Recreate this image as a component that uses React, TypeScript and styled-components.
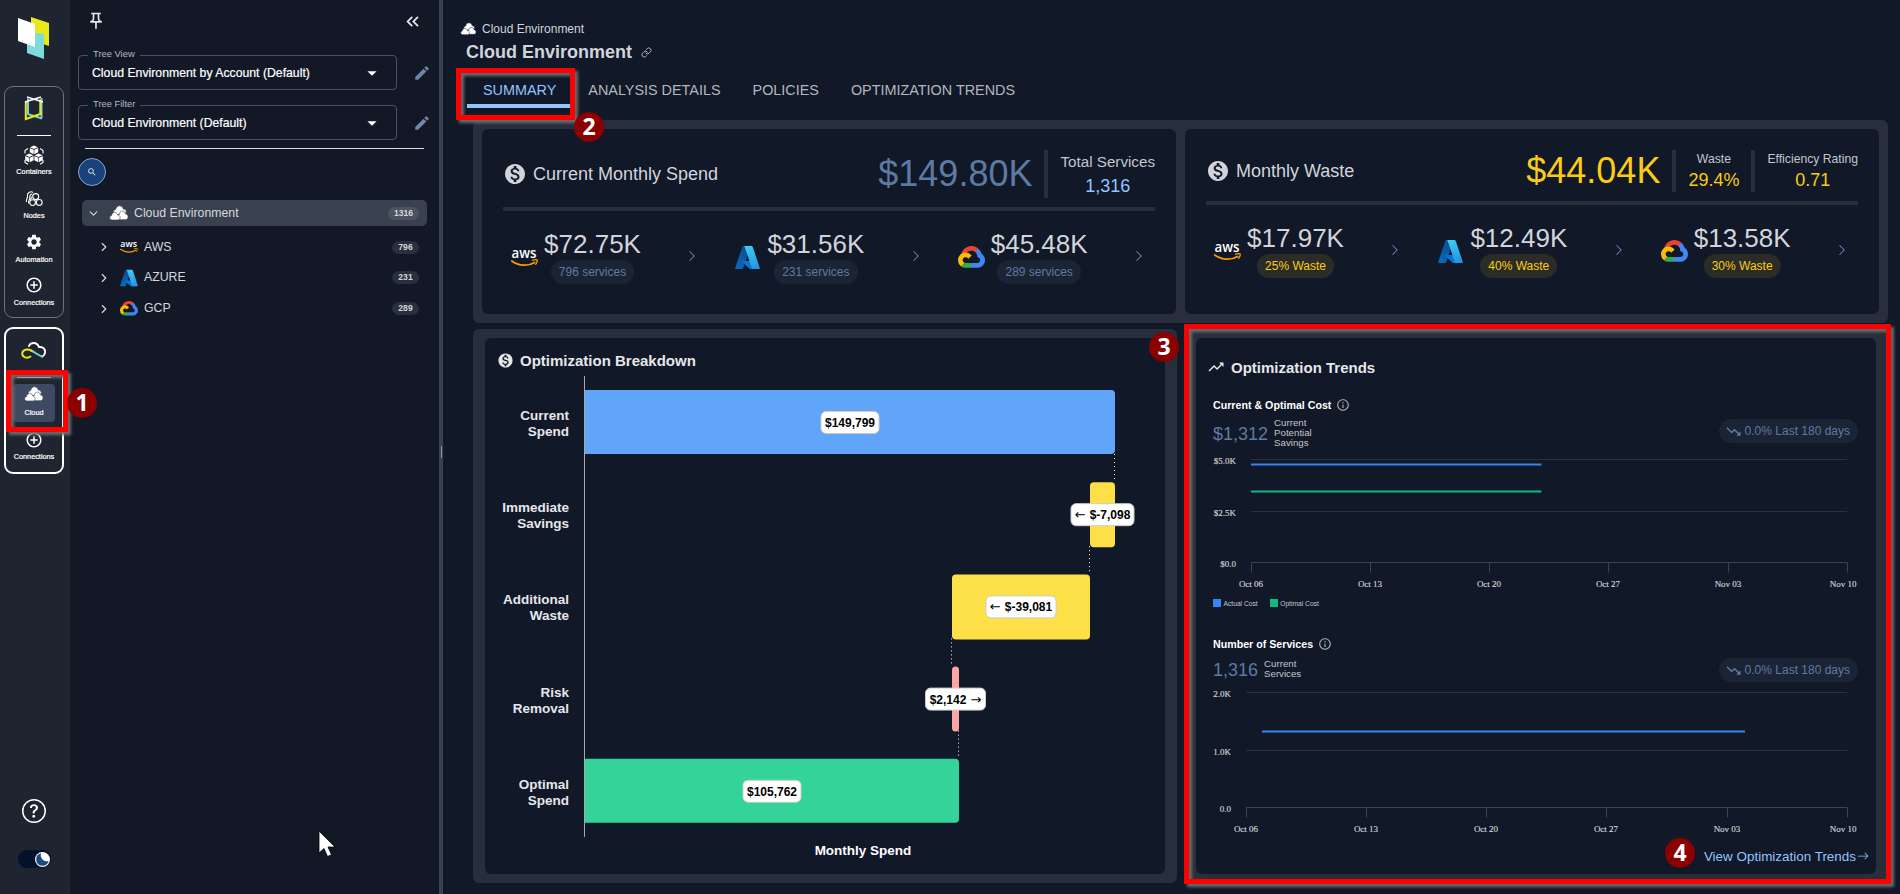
import React from "react";
import styled, { createGlobalStyle, css } from "styled-components";
import {
  MdAddCircleOutline,
  MdArrowDropDown,
  MdEdit,
  MdInfoOutline,
  MdKeyboardDoubleArrowLeft,
  MdMonetizationOn,
  MdOutlinePushPin,
  MdSearch,
  MdSettings,
  MdTrendingDown,
  MdTrendingUp,
} from "react-icons/md";
import { BsArrowRight, BsChevronRight, BsQuestionCircle } from "react-icons/bs";
import { FiChevronDown, FiChevronRight, FiLink } from "react-icons/fi";

const GlobalStyle = createGlobalStyle`
  * { box-sizing: border-box; }
  body {
    margin: 0;
    background: #111827;
    color: #d1d5db;
    font-family: "Liberation Sans", Arial, sans-serif;
    overflow: hidden;
  }
  svg { display: block; flex: none; overflow: visible; }
`;

/* ---------- shell ---------- */

const Shell = styled.div`
  position: relative;
  display: flex;
  width: 1900px;
  height: 894px;
  overflow: hidden;
  white-space: nowrap;
`;

const Rail = styled.nav`
  width: 70px;
  padding: 17px 4px 26px;
  background: #1e2430;
  display: flex;
  flex-direction: column;
  align-items: center;
`;

const RailGroup = styled.div<{ $active?: boolean }>`
  width: 60px;
  margin-left: -2px;
  border-radius: 9px;
  border: ${(p) => (p.$active ? "2px solid #fff" : "1px solid #6b7280")};
  display: flex;
  flex-direction: column;
  align-items: center;
  height: ${(p) => (p.$active ? 147 : 232)}px;
  margin-top: ${(p) => (p.$active ? 9 : 26)}px;
  padding-top: ${(p) => (p.$active ? 13 : 9)}px;
`;

const RailRule = styled.hr<{ $top: number }>`
  width: 34px;
  height: 1px;
  border: 0;
  margin: ${(p) => p.$top}px 0 0;
  background: #fff;
`;

const RailItem = styled.a<{ $height: number; $top?: number; $selected?: boolean }>`
  width: 56px;
  height: ${(p) => p.$height}px;
  margin-top: ${(p) => p.$top ?? 0}px;
  display: flex;
  flex-direction: column;
  align-items: center;
  justify-content: space-between;
  font-size: 7.3px;
  line-height: 9px;
  color: #fff;
  -webkit-text-stroke: 0.2px #fff;
  ${(p) =>
    p.$selected &&
    css`
      width: 42px;
      background: #3d4a61;
      border-radius: 4px;
      padding: 3px 0 5px;
    `}
`;

const RailFooter = styled.div`
  margin-top: auto;
  margin-left: -2px;
  display: flex;
  flex-direction: column;
  align-items: center;
  gap: 27px;
  color: #fff;
`;

const ThemeSwitch = styled.div`
  width: 33px;
  height: 18px;
  border-radius: 9px;
  background: #03112a;
  display: flex;
  align-items: center;
  justify-content: flex-end;
`;

const TreePane = styled.aside`
  width: 369px;
  background: #121826;
`;

const PaneTop = styled.div`
  height: 56px;
  padding: 11px 16px 0 16px;
  display: flex;
  justify-content: space-between;
  color: #e5e7eb;
`;

const FieldRow = styled.div`
  display: flex;
  align-items: center;
  margin: 0 8px 16px 8px;
  gap: 16px;
  color: #7186ab;
`;

const Field = styled.fieldset`
  width: 320px;
  height: 38px;
  margin: -4px 0 0;
  border: 1px solid #4b5261;
  border-radius: 4px;
  padding: 0 13px 0 13px;
  display: flex;
  align-items: center;
  justify-content: space-between;
  color: #fff;
  min-width: 0;
`;

const FieldLegend = styled.legend`
  padding: 0 5px;
  margin-left: -4px;
  height: 7px;
  line-height: 4px;
  font-size: 9.4px;
  color: #b6bac2;
`;

const FieldValue = styled.div`
  display: flex;
  align-items: center;
  justify-content: space-between;
  width: 292px;
  height: 28px;
  margin-top: -2px;
  font-size: 12.25px;
  -webkit-text-stroke: 0.2px #fff;
`;

const PaneRule = styled.hr`
  height: 1px;
  border: 0;
  background: #d7dae0;
  margin: -8px 15px 9px;
`;

const SearchButton = styled.button`
  width: 28px;
  height: 28px;
  margin-left: 8px;
  border-radius: 50%;
  border: 1px solid #8ea3c4;
  background: #17427b;
  color: #e5e7eb;
  display: grid;
  place-items: center;
  padding: 0;
`;

const Tree = styled.div`
  margin: 14px 12px 0;
`;

const TreeBranch = styled.div`
  padding-top: 6px;
`;

const TreeRow = styled.div<{ $height: number; $selected?: boolean; $level?: number }>`
  height: ${(p) => p.$height}px;
  display: flex;
  align-items: center;
  padding: 0 8px 0 ${(p) => (p.$level ? 15 : 5)}px;
  border-radius: 5px;
  background: ${(p) => (p.$selected ? "#3a414e" : "transparent")};
  color: #d5d8de;
  font-size: 12.3px;
`;

const TreeIcon = styled.span<{ $left: number }>`
  width: 18px;
  margin: 0 6px 0 ${(p) => p.$left}px;
  display: grid;
  place-items: center;
`;

const TreeLabel = styled.span`
  flex: 1;
  margin-top: -1px;
`;

const CountPill = styled.span<{ $wide?: boolean }>`
  width: ${(p) => (p.$wide ? 31 : 27)}px;
  height: 13px;
  border-radius: 7px;
  background: ${(p) => (p.$wide ? "#4d535e" : "#292f3b")};
  color: #d1d5db;
  font-size: 8.6px;
  font-weight: bold;
  line-height: 13px;
  text-align: center;
`;

const Divider = styled.div`
  width: 4px;
  background: #3a4250;
  display: flex;
  align-items: flex-start;
  padding: 446px 0 0 2px;
`;

const Grip = styled.span`
  width: 1px;
  height: 12px;
  background: #8b919c;
`;

const Main = styled.main`
  flex: 1;
  padding: 21px 12px 0 13px;
`;

/* ---------- header ---------- */

const Breadcrumb = styled.div`
  display: flex;
  align-items: center;
  gap: 6px;
  height: 16px;
  margin-left: 5px;
  font-size: 12px;
`;

const Title = styled.h1`
  margin: 5px 0 0 10px;
  height: 20px;
  display: flex;
  align-items: center;
  gap: 9px;
  font-size: 18px;
  line-height: 20px;
`;

const Tabs = styled.div`
  display: flex;
  margin: 10px 0 12px 11px;
  height: 36px;
`;

const Tab = styled.a<{ $active?: boolean }>`
  padding: 0 16px;
  height: 36px;
  line-height: 36px;
  font-size: 14.4px;
  color: ${(p) => (p.$active ? "#93c5fd" : "#b4b7bd")};
  border-bottom: 4px solid ${(p) => (p.$active ? "#93c5fd" : "transparent")};
`;

/* ---------- panels ---------- */

const Panel = styled.section<{ $pad: string; $width?: number }>`
  display: flex;
  gap: 9px;
  padding: ${(p) => p.$pad};
  background: #282e3b;
  border-radius: 6px;
  ${(p) => p.$width && `width: ${p.$width}px;`}
`;

const Panels = styled.div`
  padding-left: 17px;
  display: flex;
  flex-direction: column;
  gap: 6px;
`;

const PanelRow = styled.div`
  display: flex;
  gap: 7px;
`;

const Card = styled.div`
  flex: 1;
  background: #111827;
  border-radius: 6px;
`;

const CostCard = styled(Card)`
  height: 185px;
  padding: 21px;
`;

const CostHead = styled.div<{ $height: number }>`
  height: ${(p) => p.$height + 9 + 4}px;
  padding-bottom: 9px;
  border-bottom: 4px solid #282e3b;
  display: flex;
  align-items: stretch;
`;

const CostTitle = styled.h2`
  flex: 1;
  margin: 0;
  display: flex;
  align-items: center;
  gap: 6px;
  font-size: 18px;
  font-weight: normal;
`;

const CostTotal = styled.div<{ $warn?: boolean }>`
  display: flex;
  align-items: center;
  font-size: 36px;
  line-height: 36px;
  margin-right: 12px;
  color: ${(p) => (p.$warn ? "#facc15" : "#5d7aa3")};
`;

const Metric = styled.div<{ $compact?: boolean }>`
  border-left: 4px solid #282e3b;
  padding-left: 12px;
  margin-right: ${(p) => (p.$compact ? 12 : 0)}px;
  display: flex;
  flex-direction: column;
  align-items: center;
  &:last-child { margin-right: 0; }
`;

const MetricLabel = styled.span<{ $size: number; $line: number }>`
  font-size: ${(p) => p.$size}px;
  line-height: ${(p) => p.$line}px;
  color: #c3c6cc;
`;

const MetricValue = styled.span<{ $warn?: boolean }>`
  font-size: 18px;
  line-height: 24px;
  color: ${(p) => (p.$warn ? "#facc15" : "#93c5fd")};
`;

const Providers = styled.div`
  display: grid;
  grid-template-columns: repeat(3, 1fr);
  column-gap: 18px;
  padding-top: 17px;
`;

const Provider = styled.div`
  display: flex;
  align-items: center;
  height: 56px;
  padding: 0 10px 0 8px;
  color: #7ba3dc;
`;

const ProviderMark = styled.span`
  width: 27px;
  padding-top: 2px;
  display: grid;
  place-items: center;
`;

const ProviderBody = styled.div`
  width: 97px;
  margin: 0 auto 0 6px;
  display: flex;
  flex-direction: column;
  align-items: center;
`;

const ProviderCost = styled.span`
  font-size: 26px;
  line-height: 32px;
  color: #d1d5db;
`;

const Pill = styled.span<{ $warn?: boolean }>`
  display: flex;
  align-items: center;
  height: 24px;
  padding: 0 8px;
  border-radius: 12px;
  font-size: 12px;
  background: ${(p) => (p.$warn ? "#2b2c27" : "#1b2434")};
  color: ${(p) => (p.$warn ? "#facc15" : "#5d7aa3")};
`;

const ChangePill = styled(Pill)<{ $shift?: number }>`
  gap: 3px;
  padding: 0 8px 0 6px;
  margin-top: ${(p) => p.$shift ?? 0}px;
`;

/* ---------- breakdown & trends ---------- */

const CardTitle = styled.h3<{ $outdent?: number }>`
  margin: 0 0 0 ${(p) => -(p.$outdent ?? 0)}px;
  height: 24px;
  display: flex;
  align-items: center;
  gap: 6px;
  font-size: 15px;
  color: #e5e7eb;
`;

const BreakdownCard = styled(Card)`
  height: 536px;
  padding: 10px 0 0 13px;
  display: flex;
  flex-direction: column;
  gap: 2px;
`;

const TrendsCard = styled(Card)`
  height: 536px;
  padding: 17px 18px 0 17px;
  display: flex;
  flex-direction: column;
`;

const TrendHeading = styled.h4<{ $top: number }>`
  margin: ${(p) => p.$top}px 0 0;
  height: 16px;
  display: flex;
  align-items: center;
  gap: 5px;
  font-size: 10.67px;
  color: #fff;
  svg { color: #a7abb3; }
`;

const TrendStat = styled.div<{ $height: number }>`
  height: ${(p) => p.$height}px;
  display: flex;
  align-items: center;
`;

const StatValue = styled.span`
  padding-top: 2px;
  font-size: 18px;
  color: #5d7aa3;
`;

const StatCaption = styled.span`
  margin: 0 auto 0 6px;
  font-size: 9.7px;
  line-height: 10px;
  color: #c3c6cc;
`;

const Legend = styled.div`
  height: 12px;
  display: flex;
  align-items: center;
  gap: 12px;
  font-size: 6.7px;
  color: #c3c6cc;
`;

const LegendItem = styled.span<{ $color: string }>`
  display: flex;
  align-items: center;
  gap: 2.5px;
  &::before {
    content: "";
    width: 8px;
    height: 8px;
    background: ${(p) => p.$color};
  }
`;

const TrendsLink = styled.a`
  align-self: flex-end;
  margin: 6px -11px 0 0;
  height: 20px;
  display: flex;
  align-items: center;
  gap: 1px;
  font-size: 13.45px;
  color: #93c5fd;
`;

/* ---------- annotations ---------- */

const Highlight = styled.div<{ $x: number; $y: number; $w: number; $h: number }>`
  position: absolute;
  left: ${(p) => p.$x}px;
  top: ${(p) => p.$y}px;
  width: ${(p) => p.$w}px;
  height: ${(p) => p.$h}px;
  border: 5px solid #fe0000;
  filter: drop-shadow(3px 3px 1.5px #6b6b6b);
`;

const Step = styled.div<{ $x: number; $y: number }>`
  position: absolute;
  left: ${(p) => p.$x - 15}px;
  top: ${(p) => p.$y - 15}px;
  width: 30px;
  height: 30px;
  border-radius: 50%;
  background: #8b0000;
  color: #fff;
  font: bold 23px/28px "Open Sans", sans-serif;
  text-align: center;
`;

const Pointer = styled.svg`
  position: absolute;
  left: 318px;
  top: 830px;
`;

/* ---------- icons ---------- */

const BrandLogo = () => (
  <svg width="34" height="43" viewBox="1 0 34 43">
    <path d="M14 0l18 6v23l-18-6z" fill="#e8e81c" />
    <path d="M10 16l17 0.500v25.500l-17-6z" fill="#7fdbda" />
    <path d="M1 1l17 6v23L1 24z" fill="#fff" />
  </svg>
);

const FrameIcon = () => (
  <svg width="20" height="25" viewBox="0 0 20 25" fill="none" strokeWidth="2">
    <path d="M4 2.500v15.500M17.500 2v20M3.500 18l14.500 4.500" stroke="#7ccfd6" />
    <path d="M1.800 6v17l14.500-5V3.500" stroke="#e8e81c" />
    <path d="M1 6l16-5M19 6L3 1" stroke="#fff" strokeWidth="1.600" />
  </svg>
);

const ContainersIcon = () => (
  <svg width="20" height="20" viewBox="0 0 20 20">
    {[
      [10, 5],
      [5.4, 13],
      [14.6, 13],
    ].map(([x, y]) => (
      <g key={x} transform={`translate(${x} ${y})`} fill="#fff">
        <path d="M0-4.600L3.900-2.800 0-1 -3.900-2.800z" />
        <path d="M-4.200-2.100L-0.300-0.300v4.500L-4.200 2.300z" />
        <path d="M4.200-2.100L0.300-0.300v4.500L4.200 2.300z" />
      </g>
    ))}
    <path d="M4 3.500L1 5.500v3M16 3.500l3 2v3M1 15v2.500l3 1.700M19 15v2.500l-3 1.700" stroke="#fff" strokeWidth="1.100" fill="none" />
  </svg>
);

const NodesIcon = () => (
  <svg width="18" height="16" viewBox="0 0 18 16" fill="none" stroke="#fff" strokeWidth="1.100">
    <path d="M1.500 11c-1-2.500 1.500-3.500 1-6s1-3.500 2.500-3.500M3.800 12.500c-1-2.500 1.300-3.800 1-6s1-3.500 2.500-3.500M5.500 9c1-1.500 0.800-2 0.800-3.500M4 1.500C5.500 0.500 7 0.600 8 1.500" />
    <circle cx="10.700" cy="5.600" r="3" />
    <circle cx="7.600" cy="11.600" r="2.900" />
    <circle cx="14.200" cy="11.400" r="2.900" />
  </svg>
);

const CloudLineIcon = () => (
  <svg width="26" height="17" viewBox="0 0 26 17" fill="none" strokeWidth="1.900" strokeLinecap="round">
    <path d="M8 4C9.500 0 16-0.500 18 5c4-0.500 6.500 2 6 5.500-0.200 2-1.500 3.500-3.300 4" stroke="#fff" />
    <path d="M10 8.500c4 1.500 7 5 11.500 6" stroke="#7ccfd6" />
    <path d="M10.500 8.700C6.500 6.500 1.500 7.500 1.200 11.500c0 4 5 5.300 8.300 3" stroke="#e8e81c" />
  </svg>
);

const cloudPath =
  "M3.200 9.500C1.200 9.500 0 8.300 0 6.800 0 5.400 1.100 4.400 2.300 4.300 2.600 2 4.200 0.500 6.200 0.500 8.300 0.500 9.700 1.900 10 3.700 11.900 3.700 13 5 13 6.600 13 8.300 11.800 9.500 10.100 9.500z";

const CloudsIcon = ({ size = 18, gap = "#1e2430" }: { size?: number; gap?: string }) => (
  <svg width={size} height={(size * 14) / 18} viewBox="0 0 18 14" fill="#fff" stroke={gap} strokeWidth="0.700">
    <path d={cloudPath} transform="translate(3.300 -0.700)" />
    <path d={cloudPath} transform="translate(7.300 4.600) scale(.83 .95)" />
    <path d={cloudPath} transform="translate(-0.300 6) scale(.8 .84)" />
  </svg>
);

const AwsLogo = ({ size }: { size: number }) => (
  <svg width={size} height={(size * 20) / 27} viewBox="0 0 27 20">
    <text x="13" y="11" textAnchor="middle" fontFamily="Open Sans, sans-serif" fontSize="14" fontWeight="600" textLength="25" lengthAdjust="spacingAndGlyphs" fill="#fff">
      aws
    </text>
    <path d="M0.800 14c7 5.300 16.500 5.400 22.800 1.400" fill="none" stroke="#f90" strokeWidth="1.800" strokeLinecap="round" />
    <path d="M21.500 13.200c2-0.700 3.800-0.800 4.500-0.300 0.500 0.800-0.200 2.900-1.300 4.400" fill="none" stroke="#f90" strokeWidth="1.300" strokeLinecap="round" />
  </svg>
);

const AzureLogo = ({ size }: { size: number }) => (
  <svg width={size} height={size} viewBox="3 4 90 88">
    <defs>
      <linearGradient id="azureLeft" x1="0.600" y1="0" x2="0.300" y2="1">
        <stop offset="0" stopColor="#114a8b" />
        <stop offset="1" stopColor="#0669bc" />
      </linearGradient>
      <linearGradient id="azureRight" x1="0.400" y1="0" x2="0.600" y2="1">
        <stop offset="0" stopColor="#3ccbf4" />
        <stop offset="1" stopColor="#2892df" />
      </linearGradient>
    </defs>
    <path fill="url(#azureLeft)" d="M33.338 6.544h26.038l-27.030 80.087a4.152 4.152 0 0 1-3.933 2.824H8.149a4.145 4.145 0 0 1-3.928-5.470L29.404 9.368a4.152 4.152 0 0 1 3.934-2.825z" />
    <path fill="#0078d4" d="M71.175 60.261h-41.290a1.911 1.911 0 0 0-1.305 3.309l26.532 24.764a4.171 4.171 0 0 0 2.846 1.121h23.380z" />
    <path fill="url(#azureRight)" d="M66.595 9.364a4.145 4.145 0 0 0-3.928-2.820H33.648a4.146 4.146 0 0 1 3.928 2.820l25.184 74.620a4.146 4.146 0 0 1-3.928 5.472h29.020a4.146 4.146 0 0 0 3.927-5.472z" />
  </svg>
);

const GcpLogo = ({ size }: { size: number }) => (
  <svg width={size} height={(size * 206) / 256} viewBox="0 0 256 206">
    <path fill="#ea4335" d="M170.252 56.819l22.253-22.253 1.483-9.370C153.437-11.677 88.976-7.496 52.420 33.920 42.267 45.423 34.734 59.764 30.717 74.573l7.970-1.123 44.505-7.340 3.436-3.513c19.797-21.742 53.270-24.667 76.128-6.168l7.496.390z" />
    <path fill="#4285f4" d="M224.205 73.918a100.249 100.249 0 0 0-30.217-48.722l-31.232 31.232a55.515 55.515 0 0 1 20.379 44.037v5.544c15.350 0 27.797 12.445 27.797 27.796 0 15.352-12.446 27.485-27.797 27.485h-55.671l-5.466 5.934v33.340l5.466 5.231h55.670c39.930.311 72.553-31.494 72.864-71.424a72.303 72.303 0 0 0-31.793-60.453" />
    <path fill="#34a853" d="M71.870 205.796h55.593V161.290H71.870c-3.960 0-7.872-.850-11.479-2.499l-7.886 2.420-22.409 22.253-1.952 7.652c12.567 9.489 28.053 14.694 43.726 14.680" />
    <path fill="#fbbc05" d="M71.870 61.425C31.940 61.664-.237 94.228.001 134.158a72.301 72.301 0 0 0 28.222 56.880l32.248-32.246c-13.990-6.322-20.208-22.786-13.887-36.776 6.320-13.990 22.786-20.208 36.775-13.888a27.796 27.796 0 0 1 13.887 13.888l32.248-32.248A72.224 72.224 0 0 0 71.870 61.425" />
  </svg>
);

const MoonKnob = () => (
  <svg width="17" height="17" viewBox="0 0 17 17">
    <circle cx="8.500" cy="8.500" r="7.500" fill="#fff" />
    <path d="M7 2.300a6.300 6.300 0 1 0 7.600 7.700A6.200 6.200 0 0 1 7 2.300z" fill="#1d4a80" />
  </svg>
);

const logos = { aws: AwsLogo, azure: AzureLogo, gcp: GcpLogo };
type ProviderId = keyof typeof logos;

const ProviderLogo = ({ id, small }: { id: ProviderId; small?: boolean }) => {
  const Logo = logos[id];
  const big = id === "azure" ? 25 : 27;
  return <Logo size={small ? 18 : big} />;
};

/* ---------- data ---------- */

const spend: [ProviderId, string, string][] = [
  ["aws", "$72.75K", "796 services"],
  ["azure", "$31.56K", "231 services"],
  ["gcp", "$45.48K", "289 services"],
];

const waste: [ProviderId, string, string][] = [
  ["aws", "$17.97K", "25% Waste"],
  ["azure", "$12.49K", "40% Waste"],
  ["gcp", "$13.58K", "30% Waste"],
];

const tree: [ProviderId, string, string, number][] = [
  ["aws", "AWS", "796", 30],
  ["azure", "AZURE", "231", 31],
  ["gcp", "GCP", "289", 31],
];

const breakdown = [
  { label: ["Current", "Spend"], x: 585, w: 530, color: "#60a5fa", text: "$149,799", bw: 59 },
  { label: ["Immediate", "Savings"], x: 1090, w: 25, color: "#fde047", before: "←", text: "$-7,098", bw: 64 },
  { label: ["Additional", "Waste"], x: 952, w: 138, color: "#fde047", before: "←", text: "$-39,081", bw: 71 },
  { label: ["Risk", "Removal"], x: 952, w: 7, color: "#fca5a5", text: "$2,142", after: "→", bw: 61 },
  { label: ["Optimal", "Spend"], x: 585, w: 374, color: "#34d399", text: "$105,762", bw: 59 },
];

/* ---------- charts ---------- */

const ChartLabel = styled.text<{ $bright?: boolean }>`
  font: bold 13.5px "Liberation Sans", sans-serif;
  fill: ${(p) => (p.$bright ? "#fff" : "#e5e7eb")};
`;

const BarLabel = styled.text`
  font: bold 12px "Liberation Sans", sans-serif;
  fill: #000;
`;

const BarArrow = styled.tspan`
  font: 13px "DejaVu Sans", sans-serif;
`;

const AxisText = styled.text`
  font: 9px "Liberation Serif", serif;
  fill: #d1d5db;
  stroke: #d1d5db;
  stroke-width: 0.15px;
`;

const roundedRight = (x: number, y: number, w: number, h: number) =>
  `M${x} ${y}h${w - 4}a4 4 0 0 1 4 4v${h - 8}a4 4 0 0 1 -4 4h${-(w - 4)}z`;

const BreakdownChart = () => (
  <svg width="660" height="495" viewBox="498 374 660 495">
    <line x1="584.500" x2="584.500" y1="376" y2="837" stroke="#a5a9b1" />
    {breakdown.map((b, i) => {
      const y = 390 + i * 92.2;
      const cx = b.x + b.w / 2;
      const next = i === 0 || i === 3 ? b.x + b.w - 0.5 : b.x - 0.5;
      return (
        <g key={i}>
          {b.x === 585 ? (
            <path d={roundedRight(b.x, y, b.w, 64)} fill={b.color} />
          ) : (
            <rect x={b.x} y={y} width={b.w} height="65" rx={Math.min(4, b.w / 2)} fill={b.color} />
          )}
          {i < 4 && <line x1={next} x2={next} y1={y + 64} y2={y + 92} stroke="#fff" strokeDasharray="1 3" />}
          <rect x={cx - b.bw / 2 + 0.5} y={y + 21.5} width={b.bw - 1} height="22" rx="5" fill="#fff" stroke="#ccc" />
          <BarLabel x={cx} y={y + 37} textAnchor="middle">
            {b.before && <BarArrow>{b.before} </BarArrow>}
            {b.text}
            {b.after && <BarArrow> {b.after}</BarArrow>}
          </BarLabel>
          {b.label.map((line, j) => (
            <ChartLabel key={j} x="569" y={y + 30 + j * 16} textAnchor="end">
              {line}
            </ChartLabel>
          ))}
        </g>
      );
    })}
    <ChartLabel x="863" y="855" textAnchor="middle" $bright>
      Monthly Spend
    </ChartLabel>
  </svg>
);

const dates = ["Oct 06", "Oct 13", "Oct 20", "Oct 27", "Nov 03", "Nov 10"];

type Series = { x1: number; x2: number; y: number; color: string };

const TrendChart = (p: {
  top: number;
  height: number;
  left: number;
  rows: [string, number][];
  series: Series[];
}) => {
  const base = p.rows[p.rows.length - 1][1];
  const step = (1847.5 - p.left) / 5;
  return (
    <svg width="645" height={p.height} viewBox={`1213 ${p.top} 645 ${p.height}`}>
      {p.rows.map(([label, y], i) => (
        <g key={label}>
          <line x1={p.left} x2="1847" y1={y} y2={y} stroke={i === 2 ? "#3d4350" : "#2a303d"} />
          <AxisText x={p.left - 15} y={y + 4} textAnchor="end">
            {label}
          </AxisText>
        </g>
      ))}
      {dates.map((d, i) => {
        const x = Math.floor(p.left + i * step) + 0.5;
        const last = i === 5;
        return (
          <g key={d}>
            <line x1={x} x2={x} y1={base} y2={base + 10} stroke="#3d4350" />
            <AxisText x={last ? 1856.5 : x - 0.5} y={base + 24} textAnchor={last ? "end" : "middle"}>
              {d}
            </AxisText>
          </g>
        );
      })}
      {p.series.map((s) => (
        <line key={s.y} x1={s.x1} x2={s.x2} y1={s.y} y2={s.y} stroke={s.color} strokeWidth="2" />
      ))}
    </svg>
  );
};

/* ---------- sections ---------- */

const ProviderList = ({ items, warn }: { items: typeof spend; warn?: boolean }) => (
  <Providers>
    {items.map(([id, cost, note]) => (
      <Provider key={id}>
        <ProviderMark>
          <ProviderLogo id={id} />
        </ProviderMark>
        <ProviderBody>
          <ProviderCost>{cost}</ProviderCost>
          <Pill $warn={warn}>{note}</Pill>
        </ProviderBody>
        <BsChevronRight size={12} />
      </Provider>
    ))}
  </Providers>
);

const TreeField = ({ label, value }: { label: string; value: string }) => (
  <FieldRow>
    <Field>
      <FieldLegend>{label}</FieldLegend>
      <FieldValue>
        {value}
        <MdArrowDropDown size={22} />
      </FieldValue>
    </Field>
    <MdEdit size={18} />
  </FieldRow>
);

export default function App() {
  return (
    <>
      <GlobalStyle />
      <Shell>
        <Rail>
          <BrandLogo />
          <RailGroup>
            <FrameIcon />
            <RailRule $top={14} />
            <RailItem $height={31} $top={9}>
              <ContainersIcon />
              Containers
            </RailItem>
            <RailItem $height={29} $top={15}>
              <NodesIcon />
              Nodes
            </RailItem>
            <RailItem $height={31} $top={13}>
              <MdSettings size={18} />
              Automation
            </RailItem>
            <RailItem $height={31} $top={12}>
              <MdAddCircleOutline size={18} />
              Connections
            </RailItem>
          </RailGroup>
          <RailGroup $active>
            <CloudLineIcon />
            <RailRule $top={18} />
            <RailItem $height={38} $top={6} $selected>
              <CloudsIcon gap="#3d4a61" />
              Cloud
            </RailItem>
            <RailItem $height={30} $top={9}>
              <MdAddCircleOutline size={18} />
              Connections
            </RailItem>
          </RailGroup>
          <RailFooter>
            <BsQuestionCircle size={24} />
            <ThemeSwitch>
              <MoonKnob />
            </ThemeSwitch>
          </RailFooter>
        </Rail>

        <TreePane>
          <PaneTop>
            <MdOutlinePushPin size={20} />
            <MdKeyboardDoubleArrowLeft size={21} />
          </PaneTop>
          <TreeField label="Tree View" value="Cloud Environment by Account (Default)" />
          <TreeField label="Tree Filter" value="Cloud Environment (Default)" />
          <PaneRule />
          <SearchButton>
            <MdSearch size={10} />
          </SearchButton>
          <Tree>
            <TreeRow $height={26} $selected>
              <FiChevronDown size={13} />
              <TreeIcon $left={10}>
                <CloudsIcon gap="#3a414e" />
              </TreeIcon>
              <TreeLabel>Cloud Environment</TreeLabel>
              <CountPill $wide>1316</CountPill>
            </TreeRow>
            <TreeBranch>
              {tree.map(([id, label, count, height]) => (
                <TreeRow key={id} $height={height} $level={1}>
                  <FiChevronRight size={14} />
                  <TreeIcon $left={9}>
                    <ProviderLogo id={id} small />
                  </TreeIcon>
                  <TreeLabel>{label}</TreeLabel>
                  <CountPill>{count}</CountPill>
                </TreeRow>
              ))}
            </TreeBranch>
          </Tree>
        </TreePane>

        <Divider>
          <Grip />
        </Divider>

        <Main>
          <Breadcrumb>
            <CloudsIcon size={15} gap="#111827" />
            Cloud Environment
          </Breadcrumb>
          <Title>
            Cloud Environment
            <FiLink size={11} strokeWidth={1.7} />
          </Title>
          <Tabs>
            <Tab $active>SUMMARY</Tab>
            <Tab>ANALYSIS DETAILS</Tab>
            <Tab>POLICIES</Tab>
            <Tab>OPTIMIZATION TRENDS</Tab>
          </Tabs>

          <Panels>
            <Panel $pad="9px">
              <CostCard>
                <CostHead $height={48}>
                  <CostTitle>
                    <MdMonetizationOn size={24} />
                    Current Monthly Spend
                  </CostTitle>
                  <CostTotal>$149.80K</CostTotal>
                  <Metric>
                    <MetricLabel $size={15.2} $line={24}>
                      Total Services
                    </MetricLabel>
                    <MetricValue>1,316</MetricValue>
                  </Metric>
                </CostHead>
                <ProviderList items={spend} />
              </CostCard>
              <CostCard>
                <CostHead $height={42}>
                  <CostTitle>
                    <MdMonetizationOn size={24} />
                    Monthly Waste
                  </CostTitle>
                  <CostTotal $warn>$44.04K</CostTotal>
                  <Metric $compact>
                    <MetricLabel $size={12.2} $line={18}>
                      Waste
                    </MetricLabel>
                    <MetricValue $warn>29.4%</MetricValue>
                  </Metric>
                  <Metric $compact>
                    <MetricLabel $size={12.2} $line={18}>
                      Efficiency Rating
                    </MetricLabel>
                    <MetricValue $warn>0.71</MetricValue>
                  </Metric>
                </CostHead>
                <ProviderList items={waste} warn />
              </CostCard>
            </Panel>

            <PanelRow>
              <Panel $pad="9px 12px" $width={704}>
                <BreakdownCard>
                  <CardTitle $outdent={1}>
                    <MdMonetizationOn size={17} />
                    Optimization Breakdown
                  </CardTitle>
                  <BreakdownChart />
                </BreakdownCard>
              </Panel>

              <Panel $pad="9px 12px" $width={704}>
                <TrendsCard>
                  <CardTitle $outdent={6}>
                    <MdTrendingUp size={18} />
                    Optimization Trends
                  </CardTitle>
                  <TrendHeading $top={18}>
                    Current &amp; Optimal Cost
                    <MdInfoOutline size={14} />
                  </TrendHeading>
                  <TrendStat $height={40}>
                    <StatValue>$1,312</StatValue>
                    <StatCaption>
                      Current
                      <br />
                      Potential
                      <br />
                      Savings
                    </StatCaption>
                    <ChangePill $shift={-4}>
                      <MdTrendingDown size={17} />
                      0.0% Last 180 days
                    </ChangePill>
                  </TrendStat>
                  <TrendChart
                    top={453}
                    height={144}
                    left={1251}
                    rows={[
                      ["$5.0K", 459.5],
                      ["$2.5K", 511.5],
                      ["$0.0", 562.5],
                    ]}
                    series={[
                      { x1: 1251, x2: 1541.5, y: 464.5, color: "#3b82f6" },
                      { x1: 1251, x2: 1541.5, y: 491.5, color: "#10b981" },
                    ]}
                  />
                  <Legend>
                    <LegendItem $color="#3b82f6">Actual Cost</LegendItem>
                    <LegendItem $color="#10b981">Optimal Cost</LegendItem>
                  </Legend>
                  <TrendHeading $top={27}>
                    Number of Services
                    <MdInfoOutline size={14} />
                  </TrendHeading>
                  <TrendStat $height={34}>
                    <StatValue>1,316</StatValue>
                    <StatCaption>
                      Current
                      <br />
                      Services
                    </StatCaption>
                    <ChangePill $shift={2}>
                      <MdTrendingDown size={17} />
                      0.0% Last 180 days
                    </ChangePill>
                  </TrendStat>
                  <TrendChart
                    top={686}
                    height={154}
                    left={1246}
                    rows={[
                      ["2.0K", 692.5],
                      ["1.0K", 750.5],
                      ["0.0", 807.5],
                    ]}
                    series={[{ x1: 1262, x2: 1745, y: 731.5, color: "#3b82f6" }]}
                  />
                  <TrendsLink>
                    View Optimization Trends
                    <BsArrowRight size={12} />
                  </TrendsLink>
                </TrendsCard>
              </Panel>
            </PanelRow>
          </Panels>
        </Main>

        <Highlight $x={6} $y={370} $w={62} $h={62} />
        <Highlight $x={456} $y={68} $w={119} $h={52} />
        <Highlight $x={1184} $y={324} $w={707} $h={560} />
        <Step $x={82} $y={403}>1</Step>
        <Step $x={589} $y={127}>2</Step>
        <Step $x={1164} $y={347}>3</Step>
        <Step $x={1680} $y={853}>4</Step>
        <Pointer width="18" height="28" viewBox="0 0 18 28">
          <path d="M1 1v22l5-4.500 3.500 8 4-1.800-3.500-7.700h7z" fill="#fff" stroke="#000" strokeWidth="0.800" />
        </Pointer>
      </Shell>
    </>
  );
}
